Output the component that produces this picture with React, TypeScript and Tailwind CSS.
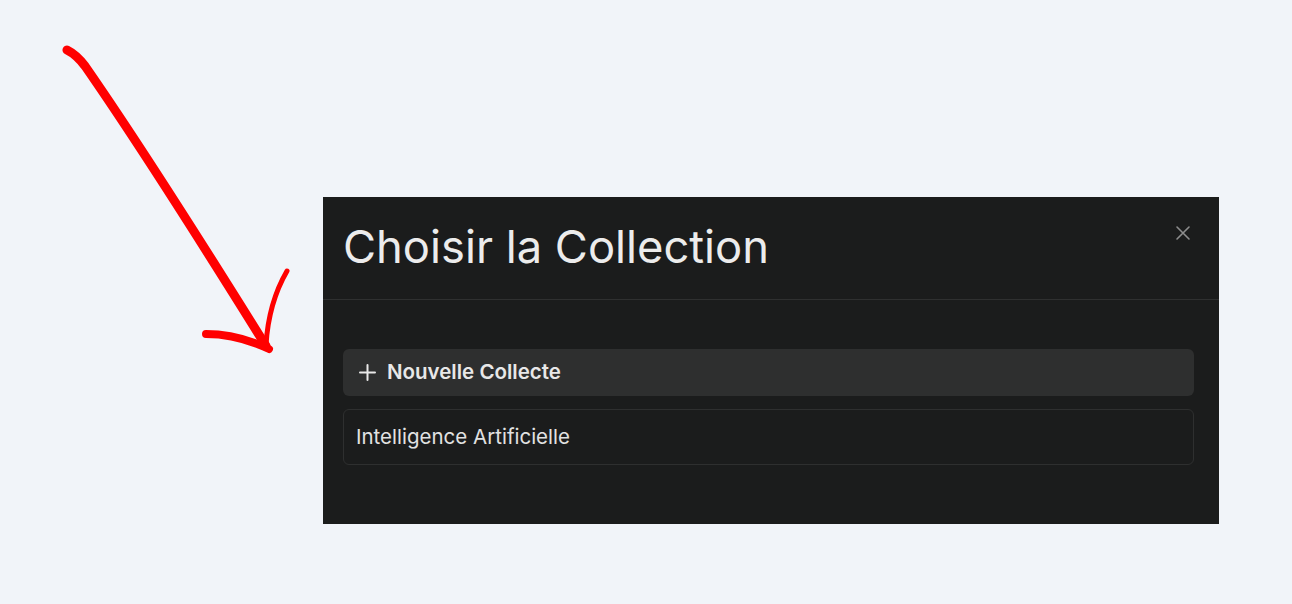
import React from 'react';

function Arrow() {
  return (
    <svg className="absolute left-0 top-0 pointer-events-none" width="320" height="380" viewBox="0 0 320 380">
      <g fill="none" stroke="#ff0000" strokeLinecap="round" strokeLinejoin="round">
        <path d="M67 50 C 73 53, 79 58, 85 66 C 140 145, 200 240, 266 346" strokeWidth="9" />
        <path d="M287 271 C 276 290, 268 312, 266 345" strokeWidth="5" />
        <path d="M206 334 C 228 334, 250 340, 269 349" strokeWidth="8" />
      </g>
    </svg>
  );
}

export default function App() {
  return (
    <div className="relative w-full h-[604px] bg-[#f1f4f9] overflow-hidden" style={{ fontFamily: 'Inter, "Noto Sans", sans-serif' }}>
      <Arrow />
      <div className="pl-[323px] pt-[197px]">
        <div className="w-[896px] h-[327px] bg-[#1b1c1c] flex flex-col">
          <div className="relative h-[103px] border-b border-[#2f3030] px-5 flex items-center">
            <h2 className="text-[45.3px] font-normal text-[#ececec] leading-none -mt-[3px]">Choisir la Collection</h2>
            <button className="absolute right-[28px] top-[28px] text-[#8d8d8d]">
              <svg width="16" height="16" viewBox="0 0 16 16" fill="none" stroke="currentColor" strokeWidth="1.6" strokeLinecap="round">
                <path d="M2 2 L14 14 M14 2 L2 14" />
              </svg>
            </button>
          </div>
          <div className="px-5 pt-[49px] flex flex-col gap-[13px] pr-[25px]">
            <button className="h-[47px] w-full rounded-md bg-[#2e2f2f] flex items-center gap-[10px] px-[15px] text-[#e8e8e8] text-[20.5px] font-semibold">
              <svg width="19" height="19" viewBox="0 0 19 19" fill="none" stroke="currentColor" strokeWidth="2" strokeLinecap="round">
                <path d="M9.5 2 V17 M2 9.5 H17" />
              </svg>
              Nouvelle Collecte
            </button>
            <div className="h-[56px] w-full rounded-md border border-[#2e2f2f] flex items-center px-[12px] text-[#e2e2e2] text-[20.5px]">
              Intelligence Artificielle
            </div>
          </div>
        </div>
      </div>
    </div>
  );
}
